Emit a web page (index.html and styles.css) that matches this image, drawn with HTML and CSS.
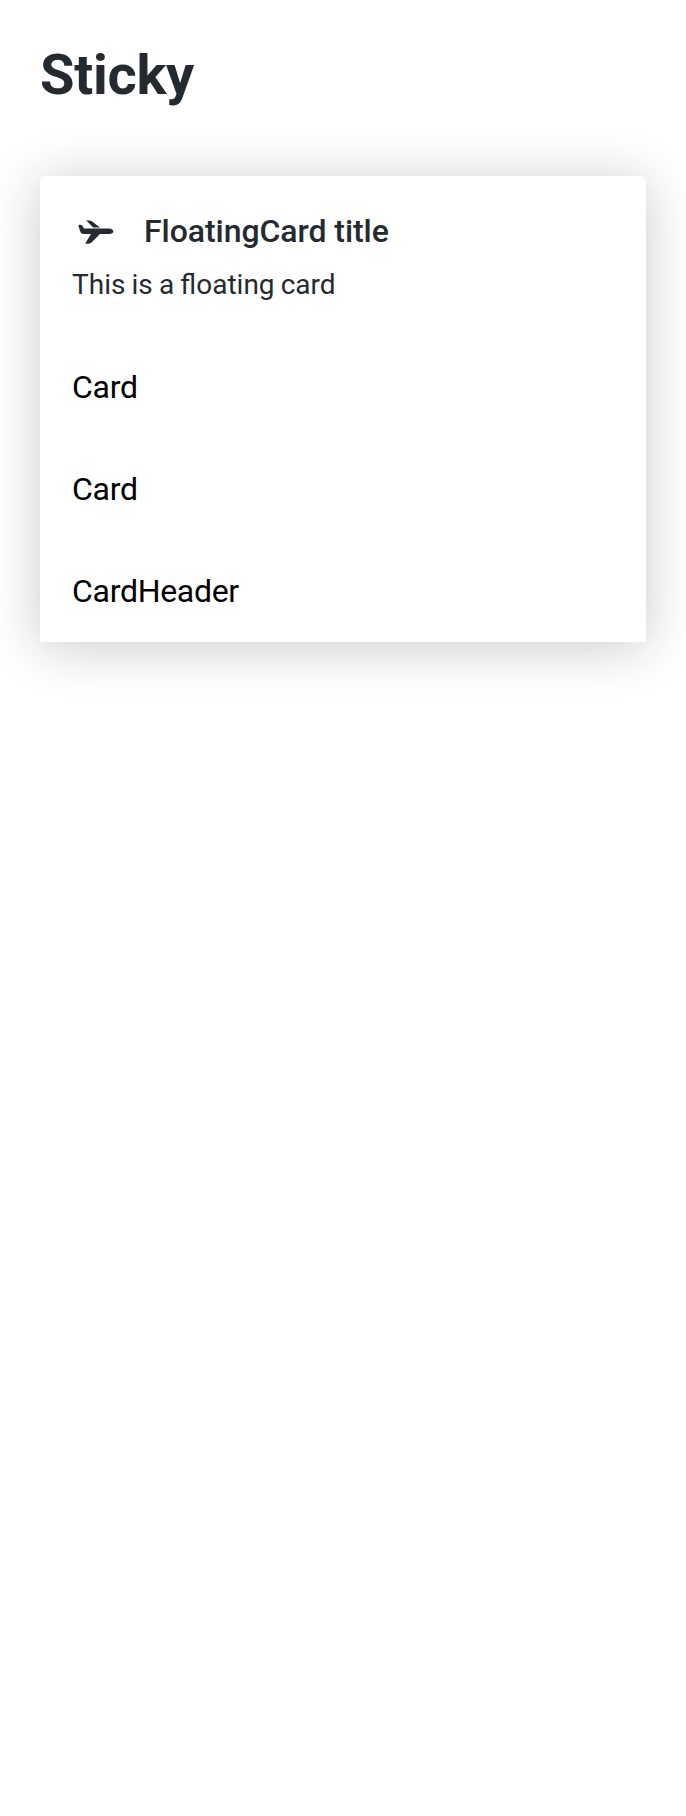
FILE: index.html
```html
<!DOCTYPE html>
<html lang="en">
<head>
<meta charset="utf-8">
<title>Sticky</title>
<link rel="stylesheet" href="styles.css">
</head>
<body>
<main class="page">
  <h1 class="heading">Sticky</h1>
  <section class="card">
    <header class="card-header">
      <svg class="icon" viewBox="0 0 48 32" aria-hidden="true">
        <path d="M6.5 9 Q6 7.8 7.5 7.7 Q9.5 7.5 10.5 9 L12 11.5 H37 Q41.3 12 41.3 14.2 Q41.3 16.8 37 17 H28 L20 25 Q18.4 26.7 16.5 26.7 H13.2 L18.9 17 H11.5 Q9 16.8 8.4 15 Z"/>
        <path d="M14.2 3.4 H16.9 Q18.6 3.4 19.9 4.3 L28 10.4 H21.2 Z"/>
      </svg>
      <h2 class="card-title">FloatingCard title</h2>
    </header>
    <p class="card-text">This is a floating card</p>
    <div class="row">Card</div>
    <div class="row">Card</div>
    <div class="row">CardHeader</div>
  </section>
</main>
</body>
</html>
```
FILE: styles.css
```css
body {
  margin: 0;
  background: #fff;
  color: #252a31;
  font-family: Roboto, sans-serif;
}
.page {
  box-sizing: border-box;
  min-height: 1816px;
  padding: 41px 40px 40px;
}
.heading {
  margin: 0;
  height: 135px;
  font-size: 56px;
  line-height: 68px;
  font-weight: 700;
  letter-spacing: -0.25px;
}
.card {
  box-sizing: border-box;
  height: 466px;
  padding: 32px;
  background: #fff;
  border-radius: 6px 6px 0 0;
  box-shadow: 0 5px 52px rgba(23, 27, 30, 0.23);
}
.card-header {
  display: flex;
  align-items: center;
  gap: 24px;
  height: 46px;
}
.icon {
  width: 48px;
  height: 32px;
  margin-top: 4px;
  fill: #252a31;
}
.card-title {
  margin: 0;
  font-size: 32px;
  line-height: 40px;
  font-weight: 500;
  letter-spacing: -0.06px;
}
.card-text {
  margin: 11px 0 31px;
  font-size: 28px;
  line-height: 40px;
  word-spacing: -0.8px;
}
.row {
  height: 38px;
  padding: 32px 0;
  color: #000;
  font-size: 32px;
  line-height: 38px;
  letter-spacing: -0.3px;
}
```
